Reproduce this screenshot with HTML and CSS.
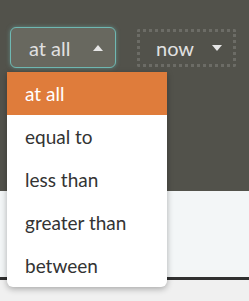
FILE: index.html
```html
<!DOCTYPE html>
<html lang="en">
<head>
    <meta charset="UTF-8">
    <meta name="viewport" content="width=device-width, initial-scale=1.0">
    <title>Filter</title>
    <link rel="stylesheet" href="styles.css">
</head>
<body>
    <div class="toolbar">
        <div class="filters">
            <button class="select open">at all <span class="arrow up"></span></button>
            <button class="select dotted">now <span class="arrow down"></span></button>
        </div>
        <ul class="menu">
            <li class="active">at all</li>
            <li>equal to</li>
            <li>less than</li>
            <li>greater than</li>
            <li>between</li>
        </ul>
    </div>
    <div class="content"></div>
    <div class="footer"></div>
</body>
</html>
```

FILE: styles.css
```css
body {
    margin: 0;
    font-family: 'Lato', 'Liberation Sans', sans-serif;
    background: #f0f0f0;
}
.toolbar {
    position: relative;
    height: 191px;
    background: #52524b;
}
.filters {
    display: flex;
    align-items: center;
    padding: 27px 0 0 10px;
    gap: 21px;
}
.select {
    display: flex;
    align-items: center;
    justify-content: space-between;
    font-family: 'Lato', 'Liberation Sans', sans-serif;
    font-size: 20px;
    color: #e0e0e0;
    background: transparent;
    cursor: pointer;
}
.select.open {
    width: 106px;
    height: 41px;
    padding: 0 12px 0 18px;
    background: #68685f;
    border: 1px solid #6fb8b2;
    border-radius: 6px;
    box-shadow: 0 0 4px rgba(111, 184, 178, 0.55);
}
.select.dotted {
    width: 99px;
    height: 38px;
    padding: 0 11px 0 16px;
    border: 3px dotted #6c6c66;
    border-radius: 2px;
}
.arrow {
    width: 0;
    height: 0;
    border-left: 5px solid transparent;
    border-right: 5px solid transparent;
}
.arrow.up {
    border-bottom: 6px solid #e6e6e6;
}
.arrow.down {
    border-top: 6px solid #e6e6e6;
}
.menu {
    position: absolute;
    left: 7px;
    top: 72px;
    width: 160px;
    margin: 0;
    padding: 0;
    list-style: none;
    background: #fff;
    border-radius: 0 0 6px 6px;
    box-shadow: 0 2px 6px rgba(0, 0, 0, 0.3);
    z-index: 2;
}
.menu li {
    height: 43px;
    line-height: 43px;
    padding-left: 18px;
    font-size: 19px;
    color: #333;
}
.menu li.active {
    background: #df7c3b;
    color: #fff;
}
.content {
    height: 86px;
    background: #f3f6f7;
}
.footer {
    height: 24px;
    border-top: 3px solid #303030;
    background: #f0f0f0;
}
```
